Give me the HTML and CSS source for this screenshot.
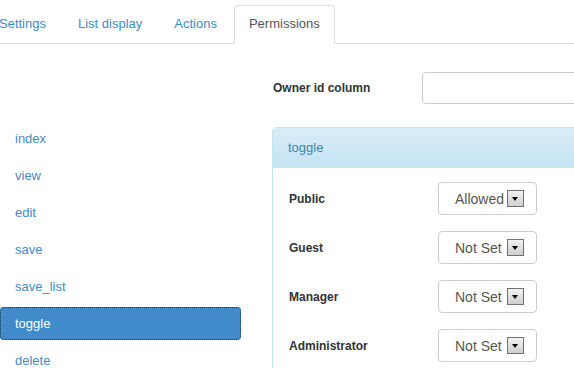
FILE: index.html
```html
<!DOCTYPE html>
<html lang="en">
<head>
    <meta charset="UTF-8">
    <title>Permissions</title>
    <link rel="stylesheet" href="styles.css">
</head>
<body>
    <div class="page">
        <ul class="tabs">
            <li><a href="#">Settings</a></li>
            <li><a href="#">List display</a></li>
            <li><a href="#">Actions</a></li>
            <li class="active"><a href="#">Permissions</a></li>
        </ul>
        <div class="main">
            <ul class="actions">
                <li><a href="#">index</a></li>
                <li><a href="#">view</a></li>
                <li><a href="#">edit</a></li>
                <li><a href="#">save</a></li>
                <li><a href="#">save_list</a></li>
                <li class="current"><a href="#">toggle</a></li>
                <li><a href="#">delete</a></li>
            </ul>
            <div class="content">
                <div class="field">
                    <label>Owner id column</label>
                    <div class="input"></div>
                </div>
                <div class="panel">
                    <div class="panel-head">toggle</div>
                    <div class="panel-body">
                        <div class="row">
                            <label>Public</label>
                            <div class="select"><span>Allowed</span><i class="drop"></i></div>
                        </div>
                        <div class="row">
                            <label>Guest</label>
                            <div class="select"><span>Not Set</span><i class="drop"></i></div>
                        </div>
                        <div class="row">
                            <label>Manager</label>
                            <div class="select"><span>Not Set</span><i class="drop"></i></div>
                        </div>
                        <div class="row">
                            <label>Administrator</label>
                            <div class="select"><span>Not Set</span><i class="drop"></i></div>
                        </div>
                    </div>
                </div>
            </div>
        </div>
    </div>
</body>
</html>
```
FILE: styles.css
```css
*{
    margin: 0;
    padding: 0;
    list-style: none;
    box-sizing: border-box;
}
body{
    font-family: "Liberation Sans", Arial, sans-serif;
    font-size: 13px;
    color: #333;
    background: #fff;
    overflow: hidden;
}
a{
    text-decoration: none;
    color: #428bca;
}
.page{
    width: 760px;
}
.tabs{
    display: flex;
    margin-left: -16px;
    padding-top: 5px;
    border-bottom: 1px solid #ddd;
}
.tabs li{
    margin-right: 2px;
    margin-bottom: -1px;
}
.tabs a{
    display: block;
    padding: 9px 14px 10px;
    line-height: 18px;
    border: 1px solid transparent;
    border-radius: 4px 4px 0 0;
}
.tabs .active a{
    color: #555;
    background: #fff;
    border-color: #ddd;
    border-bottom-color: #fff;
}
.main{
    display: flex;
}
.actions{
    width: 241px;
    margin-top: 78px;
}
.actions li{
    margin-bottom: 4px;
}
.actions a{
    display: block;
    height: 33px;
    line-height: 33px;
    padding-left: 15px;
    border-radius: 4px;
}
.actions .current a{
    background: #428bca;
    color: #fff;
    outline: 1px dotted #1a3550;
    outline-offset: -1px;
}
.content{
    margin-left: 31px;
    padding-top: 28px;
    flex: 1;
}
.field{
    display: flex;
    align-items: center;
}
.field label,
.row label{
    font-size: 12px;
    font-weight: bold;
    color: #333;
}
.field label{
    width: 150px;
    padding-left: 1px;
}
.input{
    width: 260px;
    height: 32px;
    border: 1px solid #ccc;
    border-radius: 4px;
}
.panel{
    margin-top: 23px;
    border: 1px solid #bce8f1;
    border-radius: 4px;
    width: 420px;
}
.panel-head{
    height: 40px;
    line-height: 39px;
    padding-left: 15px;
    color: #3a87ad;
    background: linear-gradient(#d9edf7, #c4e3f3);
    border-bottom: 1px solid #bce8f1;
    border-radius: 3px 3px 0 0;
}
.panel-body{
    padding: 6px 0 0 16px;
}
.row{
    display: flex;
    align-items: center;
    height: 49px;
}
.row label{
    width: 149px;
}
.select{
    display: flex;
    align-items: center;
    justify-content: space-between;
    width: 99px;
    height: 33px;
    padding: 0 12px 0 16px;
    border: 1px solid #ccc;
    border-radius: 4px;
    font-size: 14px;
    color: #555;
}
.drop{
    position: relative;
    width: 17px;
    height: 17px;
    border: 1px solid #707070;
    background: linear-gradient(#f2f2f2, #cfcfcf);
}
.drop:after{
    content: "";
    position: absolute;
    left: 4px;
    top: 6px;
    border-left: 3.5px solid transparent;
    border-right: 3.5px solid transparent;
    border-top: 4px solid #000;
}
```
